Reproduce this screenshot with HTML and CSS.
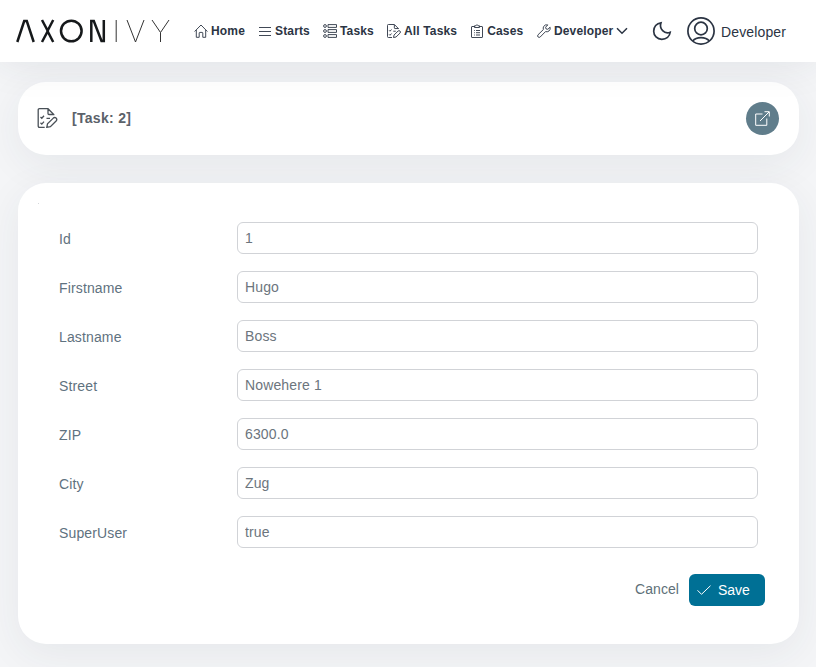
FILE: index.html
```html
<!DOCTYPE html>
<html lang="en">
<head>
<meta charset="utf-8">
<title>Task 2</title>
<link rel="stylesheet" href="styles.css">
</head>
<body>
<svg class="defs" width="0" height="0">
  <symbol id="task-edit" viewBox="0 0 20 20"><path d="M7.200 19.300H2Q.7 19.300.7 18V2Q.7.700 2 .700H10.500L16.300 6.500V7.200M10.500 1V5.500Q10.500 6.500 11.500 6.500H16.300M3 9l1.300 1.300L6.500 7.800M9 10.300h3.500M3 14.800l1.300 1.300L6.500 13.600M9.300 19.300L10 15.800 15.800 10.100Q17.200 8.800 18.600 10.100T18.600 13L12.900 18.600Z"/></symbol>
</svg>
<header class="topbar">
  <svg class="logo" width="155" height="24" viewBox="0 0 155 24" aria-label="Axon Ivy">
    <g class="heavy"><path d="M1.300 23L8.200 2h2.600L17.700 23M26 1L31.800 12 26 23M37.200 1L31.500 12 37.200 23"/><circle cx="55.300" cy="12" r="10.300"/><path d="M75.300 23V2h2.500L85.500 22H87.800V1"/></g>
    <g class="thin"><path d="M100.200 1V23M111 1L119.500 23 128 1M136 1L144.500 13.500V23M144.500 13.500L153 1"/></g>
  </svg>
  <nav class="menu">
    <a><svg class="icon" viewBox="0 0 14 14"><path d="M.6 7.500L7 1l6.400 6.500M2.300 6V13.300H5.200V9Q5.200 8.400 5.800 8.400H8.200Q8.800 8.400 8.800 9V13.300H11.700V6"/></svg>Home</a>
    <a><svg class="icon" viewBox="0 0 14 14"><path d="M1 3.500H13M1 7.500H13M1 11.500H13"/></svg>Starts</a>
    <a><svg class="icon" viewBox="0 0 14 14"><path d="M5 .6H13.500V3.400H5ZM5 5.600H13.500V8.400H5ZM5 10.600H13.500V13.400H5Z"/><circle cx="2" cy="2" r="1.400"/><circle cx="2" cy="7" r="1.400"/><circle cx="2" cy="12" r="1.400"/></svg>Tasks</a>
    <a><svg class="icon task"><use href="#task-edit"/></svg>All Tasks</a>
    <a><svg class="icon" viewBox="0 0 14 14"><path d="M4.500 2.500H2Q1.500 2.500 1.500 3V13Q1.500 13.500 2 13.500H12Q12.500 13.500 12.500 13V3Q12.500 2.500 12 2.500H9.500M4.500 3.500V1.800H6L7 .6 8 1.800H9.500V3.500ZM4 6.500h.8M6 6.500h4M4 8.700h.8M6 8.700h4M4 11h.8M6 11h4"/></svg>Cases</a>
    <a class="dev"><svg class="icon" viewBox="0 0 14 14"><path d="M10.800.9Q8 .2 6.600 2.500 5.900 4 6.400 5.500L1 10.800Q.1 12 1.100 13 2.200 13.900 3.200 13L8.500 7.600Q10.300 8.200 12 7 13.700 5.500 13.100 3.200L10.800 5.300 9 4.900 8.600 3.200Z"/></svg>Developer<svg class="chevron" viewBox="0 0 12 8"><path d="M1 1.300L6 6.300 11 1.300"/></svg></a>
  </nav>
  <svg class="moon" viewBox="0 0 20 20"><path d="M9 1.800C4.500 2.200 1.700 6 1.700 10.200 1.700 14.800 5.200 18.300 9.800 18.300 14.300 18.300 17.700 15.500 18.200 11.200 12.500 13.500 6.800 8 9 1.800Z"/></svg>
  <div class="user">
    <svg class="avatar" viewBox="0 0 28 28"><circle cx="14" cy="14" r="13.100"/><circle cx="14" cy="11.500" r="6.300"/><path d="M5.700 24Q8.500 20.600 14 20.600T22.300 24"/></svg>
    <span>Developer</span>
  </div>
</header>
<main>
  <section class="card task-head">
    <svg class="task-icon"><use href="#task-edit"/></svg>
    <h1>[Task: 2]</h1>
    <button class="open" aria-label="Open"><svg viewBox="0 0 15 15"><path d="M7.500 3H.7V14.300H11.800V7.500M5 10L14 1M9.500.7H14.300V5.500"/></svg></button>
  </section>
  <section class="card form-card">
    <div class="marker"></div>
    <form>
      <label>Id</label><input value="1">
      <label>Firstname</label><input value="Hugo">
      <label>Lastname</label><input value="Boss">
      <label>Street</label><input value="Nowehere 1">
      <label>ZIP</label><input value="6300.0">
      <label>City</label><input value="Zug">
      <label>SuperUser</label><input value="true">
    </form>
    <div class="actions">
      <a class="cancel">Cancel</a>
      <button class="save"><svg viewBox="0 0 14 10"><path d="M.5 5.300L4.500 9.300 13.500.7"/></svg>Save</button>
    </div>
  </section>
</main>
</body>
</html>
```
FILE: styles.css
```css
* { box-sizing: border-box; }
body {
  margin: 0;
  height: 667px;
  overflow: hidden;
  background: #f4f5f7;
  color: #616b75;
  font: 14px/18px "Liberation Sans", Arial, sans-serif;
  letter-spacing: .14px;
}
.defs { position: absolute; }
svg { fill: none; stroke: currentColor; flex: none; }
button { font: inherit; border: 0; padding: 0; }
.topbar {
  position: relative;
  z-index: 1;
  display: flex;
  align-items: center;
  height: 62px;
  padding-left: 15.5px;
  background: #fff;
  color: #2b3443;
  box-shadow: 0 0 40px rgba(41, 50, 65, .1);
}
.heavy { stroke: #16191b; stroke-width: 2.5; }
.thin { stroke: #333; stroke-width: 1; }
.menu { display: flex; gap: 13px; margin-left: 23.5px; width: 458px; font-size: 12px; font-weight: bold; letter-spacing: .16px; }
.menu a { display: flex; align-items: center; gap: 3px; white-space: nowrap; }
.menu .dev { margin-left: .6px; }
.icon { width: 14px; height: 14px; stroke-width: .9; }
.icon.task { stroke-width: 1.3; }
.chevron { width: 12px; height: 8px; stroke-width: 1.5; }
.moon { width: 20px; height: 20px; stroke-width: 1.7; }
.user { display: flex; align-items: center; gap: 6px; margin-left: 15px; }
.avatar { width: 28px; height: 28px; stroke-width: 1.7; }
.user span { padding-top: 2px; }
main { padding: 20px 17px 23px 18px; }
.card { background: #fff; border-radius: 28px; box-shadow: 0 10px 40px rgba(41, 50, 65, .07); }
.task-head { display: flex; align-items: center; height: 73px; padding: 0 20px 0 19px; }
.task-icon { width: 21px; height: 20px; margin-bottom: 1px; stroke-width: 1.3; color: #495057; }
h1 { margin: 0 auto 0 14px; padding-bottom: 2px; font-size: 14px; letter-spacing: .3px; color: #5b626a; }
.open {
  display: flex;
  align-items: center;
  justify-content: center;
  width: 33px;
  height: 33px;
  border-radius: 50%;
  background: #607d8b;
  color: #fff;
}
.open svg { width: 15px; height: 15px; margin-bottom: 1px; }
.form-card { height: 461px; margin-top: 28px; padding: 20px 34px 0 20px; }
.marker { width: 1px; height: 1px; background: #d5d8db; }
form {
  display: grid;
  grid-template-columns: 178px 521px;
  row-gap: 17px;
  margin: 18px 0 0 21px;
}
label { padding-top: 8px; color: #5f7280; }
input {
  width: 100%;
  height: 32px;
  padding: 0 7px;
  border: 1px solid #d1d3d7;
  border-radius: 6px;
  background: #fff;
  color: #6c757d;
  font: inherit;
  letter-spacing: inherit;
}
.actions { display: flex; justify-content: flex-end; align-items: center; gap: 10px; margin-top: 26px; }
.cancel { color: #607078; padding-bottom: 2px; letter-spacing: .05px; }
.save {
  display: flex;
  align-items: center;
  gap: 7px;
  width: 76px;
  height: 32px;
  padding-left: 8px;
  border-radius: 6px;
  background: #007095;
  color: #fff;
}
.save svg { width: 14px; height: 10px; }
```
